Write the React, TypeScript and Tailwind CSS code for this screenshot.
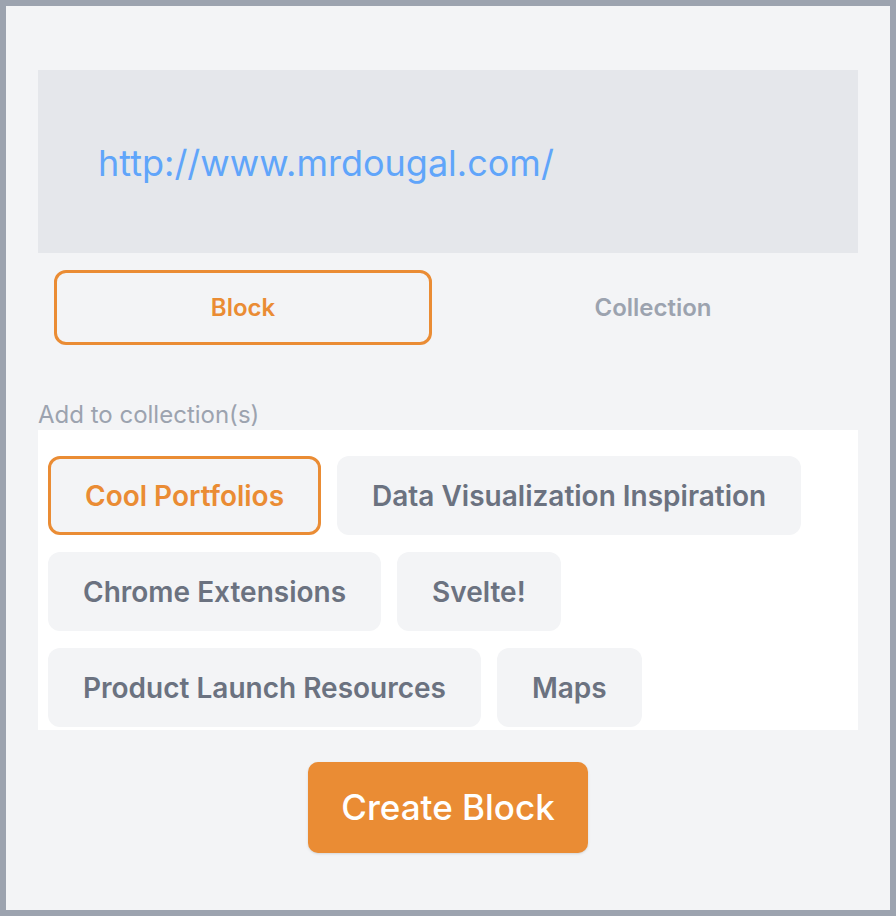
import React from 'react';

const collections = [
  { name: 'Cool Portfolios', selected: true },
  { name: 'Data Visualization Inspiration', selected: false },
  { name: 'Chrome Extensions', selected: false },
  { name: 'Svelte!', selected: false },
  { name: 'Product Launch Resources', selected: false },
  { name: 'Maps', selected: false },
];

export default function App() {
  return (
    <div
      className="w-[896px] h-[916px] border-[6px] border-[#9ca3af] bg-[#f3f4f6] px-8 pt-16 pb-[57px]"
      style={{ fontFamily: 'Inter, "Noto Sans", sans-serif' }}
    >
      {/* URL preview */}
      <div className="h-[183px] bg-[#e5e7eb] flex items-center px-[60px]">
        <span className="text-[36px] text-[#60a5fa] mt-[2px]">http://www.mrdougal.com/</span>
      </div>

      {/* Block / Collection toggle */}
      <div className="grid grid-cols-2 mt-[17px]">
        <button className="mx-4 h-[75px] rounded-xl border-[3px] border-[#ea8c34] text-[24px] font-semibold text-[#ea8c34]">
          Block
        </button>
        <button className="mx-4 h-[75px] rounded-xl text-[24px] font-semibold text-[#9ca3af]">
          Collection
        </button>
      </div>

      <div className="mt-[55px] h-[30px] text-[24px] leading-[30px] text-[#9ca3af]">Add to collection(s)</div>

      <div className="bg-white h-[300px] pl-[10px] pt-[26px] flex flex-wrap content-start gap-x-4 gap-y-[17px]">
        {collections.map((c) =>
          c.selected ? (
            <button
              key={c.name}
              className="h-[79px] px-[34px] rounded-xl border-[3px] border-[#ea8c34] bg-[#f3f4f6] text-[28px] font-semibold text-[#ea8c34]"
            >
              {c.name}
            </button>
          ) : (
            <button
              key={c.name}
              className="h-[79px] px-[35px] rounded-xl bg-[#f3f4f6] text-[28px] font-semibold text-[#6b7280]"
            >
              {c.name}
            </button>
          )
        )}
      </div>

      <div className="mt-8 flex justify-center">
        <button className="h-[91px] px-[33px] rounded-[10px] bg-[#ea8c34] text-white text-[35px] font-medium shadow-sm">
          Create Block
        </button>
      </div>
    </div>
  );
}
